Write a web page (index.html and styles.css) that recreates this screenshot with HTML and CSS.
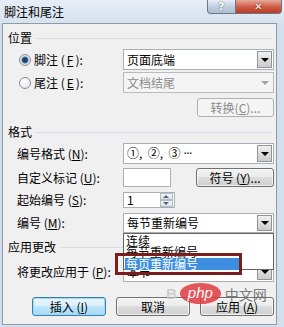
FILE: index.html
```html
<!DOCTYPE html>
<html lang="zh-CN">
<head>
  <meta charset="UTF-8" />
  <title>脚注和尾注</title>
  <link rel="stylesheet" href="styles.css">
</head>
<body>

<div class="window">
  <div class="titlebar">
    <span class="title">脚注和尾注</span>
    <div class="caption-btns">
      <span class="cap help">?</span>
      <span class="cap close">✕</span>
    </div>
  </div>

  <div class="content">
    <div class="group-head"><span>位置</span><i></i></div>
    <div class="row">
      <label class="radio-label"><span class="radio checked"></span>脚注 (<u>F</u>):</label>
      <div class="select"><span>页面底端</span><span class="arrow"></span></div>
    </div>
    <div class="row row-2">
      <label class="radio-label"><span class="radio"></span>尾注 (<u>E</u>):</label>
      <div class="select disabled"><span>文档结尾</span><span class="arrow"></span></div>
    </div>
    <div class="convert-row">
      <button class="button disabled">转换(<u>C</u>)...</button>
    </div>

    <div class="group-head head-2"><span>格式</span><i></i></div>
    <div class="row">
      <label class="field-label">编号格式 (<u>N</u>):</label>
      <div class="select"><span>①,&nbsp;&nbsp;②,&nbsp;&nbsp;③ <span class="dots">···</span></span><span class="arrow"></span></div>
    </div>
    <div class="row row-mark">
      <label class="field-label">自定义标记 (<u>U</u>):</label>
      <div class="mark-controls">
        <div class="textbox mark-box"></div>
        <button class="button symbol-btn">符号 (<u>Y</u>)...</button>
      </div>
    </div>
    <div class="row row-start">
      <label class="field-label">起始编号 (<u>S</u>):</label>
      <div class="textbox spin-box">
        <span>1</span>
        <span class="spinner"><b class="up"></b><b class="down"></b></span>
      </div>
    </div>
    <div class="row row-num">
      <label class="field-label">编号 (<u>M</u>):</label>
      <div class="select"><span>每节重新编号</span><span class="arrow"></span></div>
    </div>

    <div class="group-head head-3"><span>应用更改</span><i></i></div>
    <div class="row row-apply">
      <label class="field-label">将更改应用于 (<u>P</u>):</label>
      <div class="select"><span>本节</span><span class="arrow"></span></div>
    </div>

    <div class="actions">
      <button class="button focused">插入 (<u>I</u>)</button>
      <button class="button">取消</button>
      <button class="button">应用 (<u>A</u>)</button>
    </div>

    <div class="dropdown">
      <div class="item">连续</div>
      <div class="item">每节重新编号</div>
      <div class="item selected">每页重新编号</div>
    </div>
    <div class="mark-frame"></div>
  </div>

  <div class="watermark">
    <span class="wm-b">B</span>
    <span class="wm-php">php</span>
    <span class="wm-cn">中文网</span>
  </div>
</div>

</body>
</html>
```

FILE: styles.css
```css
* {
  box-sizing: border-box;
}
html, body {
  margin: 0;
  padding: 0;
}

.window {
  position: relative;
  width: 284px;
  height: 327px;
  overflow: hidden;
  background: #d3dfec;
  font-family: "Noto Sans CJK SC", "DejaVu Sans", sans-serif;
  font-size: 12px;
  color: #000;
}

/* title bar */
.titlebar {
  height: 23px;
  display: flex;
  justify-content: space-between;
  align-items: flex-start;
  background: linear-gradient(#e6edf6, #d6e2ef);
}
.title {
  margin: 4px 0 0 4px;
  line-height: 16px;
  font-size: 12px;
}
.caption-btns {
  display: flex;
  margin-right: 2px;
}
.cap {
  height: 14px;
  display: flex;
  align-items: center;
  justify-content: center;
  border: 1px solid #6a7789;
  border-top: none;
  color: #fff;
  font-family: "DejaVu Sans", sans-serif;
  font-weight: bold;
  font-size: 10px;
  line-height: 12px;
}
.help {
  width: 28px;
  border-right: none;
  border-radius: 0 0 0 4px;
  background: linear-gradient(#e9eff6, #c1cfdf 50%, #aebfd3);
  color: #fff;
  text-shadow: 0 0 2px #4a5a70;
}
.close {
  width: 47px;
  border-radius: 0 0 4px 0;
  background: linear-gradient(#e9a999, #cf5f49 50%, #bb3b22);
  text-shadow: 0 0 2px #5a1206;
}

/* dialog body */
.content {
  position: relative;
  margin-left: 2px;
  width: 275px;
  height: 302px;
  padding: 6px 2px 0 5px;
  background: #f0f0f0;
  border: 1px solid #8d9aab;
}

.group-head {
  display: flex;
  align-items: center;
  gap: 4px;
  height: 16px;
  line-height: 16px;
}
.group-head i {
  flex: 1;
  height: 1px;
  margin-right: 2px;
  background: #d5dfe5;
}
.head-2 { margin-top: 7px; }
.head-3 { margin-top: 6px; }

.row {
  display: grid;
  grid-template-columns: 115px 151px;
  align-items: center;
  height: 21px;
  margin-top: 3px;
}
.row-2 { margin-top: 2px; }
.row-mark { margin-top: 4px; height: 19px; }
.row-start { margin-top: 5px; height: 16px; }
.row-num { margin-top: 5px; height: 20px; }
.row-apply { margin-top: 7px; height: 20px; }

.radio-label {
  display: flex;
  align-items: center;
  gap: 2px;
  padding-left: 11px;
  line-height: 14px;
}
.field-label {
  padding-left: 9px;
  line-height: 14px;
}
u {
  text-decoration: underline;
}

.radio {
  width: 12px;
  height: 12px;
  border-radius: 50%;
  border: 1px solid #8a8f96;
  background: radial-gradient(circle at 40% 35%, #fff, #dde2e8);
  margin-right: 1px;
}
.radio.checked {
  background: radial-gradient(circle, #1e3f66 0 2px, #4f7aa8 3px, #dde2e8 4px, #eef1f4);
}

/* drop-down boxes */
.select {
  height: 100%;
  display: flex;
  align-items: center;
  justify-content: space-between;
  background: #fff;
  border: 1px solid #a9b0b8;
  padding: 0 1px 0 3px;
  line-height: 14px;
}
.dots {
  font-family: "DejaVu Sans", sans-serif;
  letter-spacing: -1px;
}
.arrow {
  position: relative;
  width: 15px;
  height: calc(100% - 2px);
  border: 1px solid #8f959c;
  background: linear-gradient(#f1f1f1, #dcdcdc 50%, #cbcbcb);
}
.arrow::after {
  content: '';
  position: absolute;
  left: 3px;
  top: 50%;
  margin-top: -2px;
  border-left: 4px solid transparent;
  border-right: 4px solid transparent;
  border-top: 4px solid #000;
}
.select.disabled {
  background: #f4f4f4;
  border-color: #b8bcc0;
  color: #8d8d8d;
}
.select.disabled .arrow {
  border-color: transparent;
  background: none;
}
.select.disabled .arrow::after {
  border-top-color: #a5a5a5;
}

.textbox {
  height: 100%;
  background: #fff;
  border: 1px solid #a9b0b8;
}

.mark-controls {
  display: flex;
  justify-content: space-between;
  height: 100%;
}
.mark-box {
  width: 48px;
}
.symbol-btn {
  width: 78px;
}

.spin-box {
  width: 52px;
  display: flex;
  align-items: center;
  justify-content: space-between;
  padding: 0 1px 0 3px;
  line-height: 14px;
}
.spinner {
  display: flex;
  flex-direction: column;
  width: 13px;
  height: 14px;
}
.spinner b {
  position: relative;
  flex: 1;
  border: 1px solid #b2bac3;
  background: linear-gradient(#f4f6f8, #dde3ea);
}
.spinner b::after {
  content: '';
  position: absolute;
  left: 2px;
  top: 1px;
  border-left: 3px solid transparent;
  border-right: 3px solid transparent;
}
.spinner .up::after {
  border-bottom: 3px solid #4d6185;
}
.spinner .down::after {
  border-top: 3px solid #4d6185;
}

/* buttons */
.button {
  height: 19px;
  padding: 0;
  font-family: inherit;
  font-size: 12px;
  line-height: 14px;
  color: #000;
  border: 1px solid #707070;
  border-radius: 3px;
  background: linear-gradient(#f2f2f2, #ebebeb 50%, #dddddd 50%, #cfcfcf);
  box-shadow: inset 0 0 0 1px rgba(255,255,255,0.7);
}
.button.disabled {
  color: #8a8a8a;
  border-color: #adb2b5;
  background: #f4f4f4;
  box-shadow: none;
}
.button.focused {
  border-color: #3c7fb1;
  background: linear-gradient(#eaf6fd, #d9f0fc 50%, #bee6fd 50%, #a7d9f5);
  box-shadow: inset 0 0 0 1px #9fd7f4;
}

.convert-row {
  display: flex;
  justify-content: flex-end;
  margin-top: 5px;
}
.convert-row .button {
  width: 77px;
}

.actions {
  display: flex;
  gap: 10px;
  margin-top: 15px;
  padding-left: 24px;
}
.actions .button {
  width: 74px;
}

/* open list of the 编号 box */
.dropdown {
  position: absolute;
  left: 120px;
  top: 209px;
  width: 151px;
  height: 37px;
  padding: 1px 0 0 1px;
  background: #fff;
  border: 1px solid #646464;
}
.item {
  height: 11px;
  line-height: 11px;
  padding-left: 1px;
  font-size: 12px;
  white-space: nowrap;
}
.item.selected {
  width: 116px;
  height: 12px;
  margin-top: 1px;
  background: #3d8ee0;
  color: #fff;
}

.mark-frame {
  position: absolute;
  left: 112px;
  top: 229px;
  width: 127px;
  height: 22px;
  border: 3px solid #7a1d1d;
}

/* site watermark */
.watermark {
  position: absolute;
  left: 166px;
  top: 283px;
  display: flex;
  align-items: center;
  opacity: 0.85;
}
.wm-b {
  color: #c8c8c8;
  font-family: "Liberation Sans", sans-serif;
  font-weight: bold;
  font-size: 15px;
  margin-right: 3px;
}
.wm-php {
  width: 41px;
  height: 21px;
  border-radius: 50%;
  background: #e03a3e;
  color: #fff;
  font-family: "Liberation Sans", sans-serif;
  font-style: italic;
  font-size: 15px;
  line-height: 20px;
  text-align: center;
}
.wm-cn {
  margin-left: 4px;
  color: #666;
  font-size: 14px;
  line-height: 16px;
}
```
